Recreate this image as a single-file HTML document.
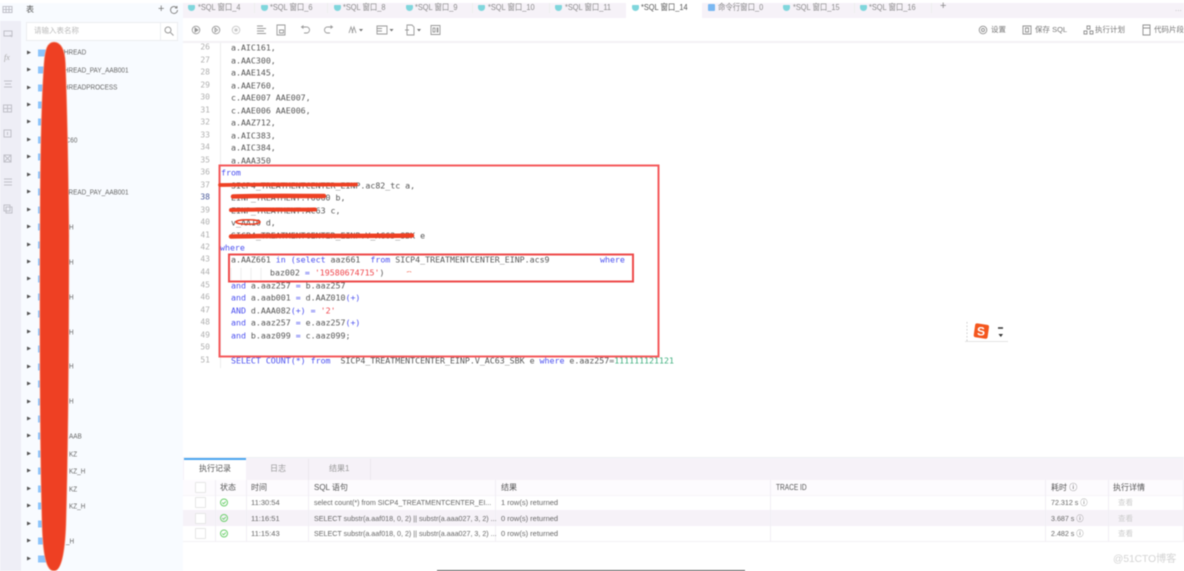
<!DOCTYPE html>
<html lang="zh"><head><meta charset="utf-8"><title>SQL</title>
<style>
html,body{margin:0;padding:0;background:#fff}
#p{position:relative;width:1184px;height:571px;overflow:hidden;background:#fff;font-family:"Liberation Sans","Noto Sans CJK SC",sans-serif;filter:blur(.5px)}
#p div,#p span.a{position:absolute;white-space:pre}
.tab{top:0;height:15px;line-height:15px;font-size:8.5px;color:#8a8a8a;transform:scaleX(.87);transform-origin:left}
.ti{top:4.500px;width:7px;height:6px;background:#7fd6dc;border-radius:1px 1px 4px 4px}
.n{left:190px;width:20px;text-align:right;font:8px/12px "DejaVu Sans Mono",monospace;color:#b0b0b0;transform:translateY(-.3px)}
.c{font:8.27px/12px "DejaVu Sans Mono",monospace;color:#555;transform:translateY(-.3px)}
.k{color:#4a4ff0}.s{color:#f0444a}.g{color:#3cae7c}
.arr{left:27px;width:0;height:0;border-left:4px solid #555;border-top:2.5px solid transparent;border-bottom:2.5px solid transparent;transform:translateY(.5px)}
.tb{left:38px;width:8px;height:7px;background:#8cc4fb;transform:translateY(.5px)}
.tt{font-size:7.500px;line-height:10px;color:#666}
.tr{transform:translateY(.7px) scaleX(.85);transform-origin:left;font-size:7.500px}
.h{font-size:8px;line-height:15px;color:#555}
.r{font-size:7.5px;line-height:15px;color:#666}
.q{transform:scaleX(.95);transform-origin:left}
.v{width:1px;background:#f1eef4;top:480px;height:61px}
.cb{left:195px;width:9px;height:9px;border:1px solid #e6e6e6;background:#fff;border-radius:1px}
</style></head><body>
<div id="p">
<!-- panels -->
<div style="left:0;top:3px;width:183px;height:568px;background:#f8fbff"></div>
<div style="left:0;top:21px;width:21px;height:550px;background:#eeeef6"></div>
<div style="left:183px;top:3px;width:1001px;height:15px;background:#f6f2f8"></div>
<div style="left:626px;top:3px;width:76px;height:15px;background:#fff"></div>
<div style="left:183px;top:41px;width:1001px;height:2px;background:#f3f2f5"></div>
<!-- rail icons -->
<svg style="position:absolute;left:0;top:0" width="21" height="220" fill="none" stroke="#c0c0c8" stroke-width="1">
<path d="M3 6.500h9v6h-9zM3 9.500h9M6 6.500v6M9 6.500v6"/>
<path d="M4 31h8v5h-8zM10 35l2 2"/>
<path d="M4 81h8M5 84h6M4 87h8"/>
<path d="M3.500 105h8v7h-8zM7.500 105v7M3.500 108.500h8"/>
<path d="M4 130h7v7h-7zM7.500 132v3"/>
<path d="M4 155h7v7h-7zM4 155l7 7M11 155l-7 7"/>
<path d="M4 179h8M4 182h8M4 185h8"/>
<path d="M4 205h6v6h-6zM6 207h6v6h-6z"/>
</svg>
<div style="left:4px;top:53px;font:italic 8px/10px 'Liberation Serif',serif;color:#aaa">fx</div>
<!-- sidebar head -->
<div style="left:26px;top:3px;font-size:8px;line-height:13px;color:#555">表</div>
<div style="left:158px;top:3px;font-size:11px;line-height:13px;color:#777">+</div>
<svg style="position:absolute;left:169px;top:5px" width="10" height="10" fill="none" stroke="#888"><path d="M8.500 5a3.500 3.500 0 1 1-1-2.500M8 1v2H6"/></svg>
<div style="left:26px;top:22px;width:150px;height:17px;background:#fff;border:1px solid #ecedf0"></div>
<div style="left:160px;top:23px;width:1px;height:17px;background:#eceef1"></div>
<div style="left:34px;top:25px;font-size:7.500px;line-height:12px;color:#bbb">请输入表名称</div>
<svg style="position:absolute;left:164px;top:26px" width="10" height="10" fill="none" stroke="#999"><circle cx="4" cy="4" r="3"/><path d="M6.500 6.500l3 3"/></svg>
<!-- tree -->
<div class="arr" style="top:49.500px"></div><div class="tb" style="top:48.500px"></div>
<div class="arr" style="top:67px"></div><div class="tb" style="top:66px"></div>
<div class="arr" style="top:84.500px"></div><div class="tb" style="top:83.500px"></div>
<div class="arr" style="top:102px"></div><div class="tb" style="top:101px"></div>
<div class="arr" style="top:119.300px"></div><div class="tb" style="top:118.300px"></div>
<div class="arr" style="top:136.800px"></div><div class="tb" style="top:135.800px"></div>
<div class="arr" style="top:154.200px"></div><div class="tb" style="top:153.200px"></div>
<div class="arr" style="top:171.700px"></div><div class="tb" style="top:170.700px"></div>
<div class="arr" style="top:189.100px"></div><div class="tb" style="top:188.100px"></div>
<div class="arr" style="top:206.600px"></div><div class="tb" style="top:205.600px"></div>
<div class="arr" style="top:224px"></div><div class="tb" style="top:223px"></div>
<div class="arr" style="top:241.500px"></div><div class="tb" style="top:240.500px"></div>
<div class="arr" style="top:258.900px"></div><div class="tb" style="top:257.900px"></div>
<div class="arr" style="top:276.400px"></div><div class="tb" style="top:275.400px"></div>
<div class="arr" style="top:293.800px"></div><div class="tb" style="top:292.800px"></div>
<div class="arr" style="top:311.300px"></div><div class="tb" style="top:310.300px"></div>
<div class="arr" style="top:328.700px"></div><div class="tb" style="top:327.700px"></div>
<div class="arr" style="top:346.200px"></div><div class="tb" style="top:345.200px"></div>
<div class="arr" style="top:363.600px"></div><div class="tb" style="top:362.600px"></div>
<div class="arr" style="top:381.100px"></div><div class="tb" style="top:380.100px"></div>
<div class="arr" style="top:398.500px"></div><div class="tb" style="top:397.500px"></div>
<div class="arr" style="top:416px"></div><div class="tb" style="top:415px"></div>
<div class="arr" style="top:433.400px"></div><div class="tb" style="top:432.400px"></div>
<div class="arr" style="top:450.900px"></div><div class="tb" style="top:449.900px"></div>
<div class="arr" style="top:468.300px"></div><div class="tb" style="top:467.300px"></div>
<div class="arr" style="top:485.800px"></div><div class="tb" style="top:484.800px"></div>
<div class="arr" style="top:503.200px"></div><div class="tb" style="top:502.200px"></div>
<div class="arr" style="top:520.700px"></div><div class="tb" style="top:519.700px"></div>
<div class="arr" style="top:538.100px"></div><div class="tb" style="top:537.100px"></div>
<div class="arr" style="top:555.600px"></div><div class="tb" style="top:554.600px"></div>
<div class="tt tr" style="left:60px;top:47px">THREAD</div>
<div class="tt tr" style="left:60px;top:64.500px">THREAD_PAY_AAB001</div>
<div class="tt tr" style="left:60px;top:82px">THREADPROCESS</div>
<div class="tt tr" style="left:58px;top:134.500px">TAC60</div>
<div class="tt tr" style="left:60px;top:186.500px">THREAD_PAY_AAB001</div>
<div class="tt tr" style="left:69px;top:221.500px">H</div>
<div class="tt tr" style="left:69px;top:256.500px">H</div>
<div class="tt tr" style="left:69px;top:291.500px">H</div>
<div class="tt tr" style="left:69px;top:326.500px">H</div>
<div class="tt tr" style="left:69px;top:361px">H</div>
<div class="tt tr" style="left:69px;top:396px">H</div>
<div class="tt tr" style="left:69px;top:431px">AAB</div>
<div class="tt tr" style="left:69px;top:448.500px">KZ</div>
<div class="tt tr" style="left:69px;top:466px">KZ_H</div>
<div class="tt tr" style="left:69px;top:483.500px">KZ</div>
<div class="tt tr" style="left:69px;top:501px">KZ_H</div>
<div class="tt tr" style="left:66px;top:536px">_H</div>
<!-- red redaction -->
<svg style="position:absolute;left:30px;top:35px" width="50" height="536"><path d="M24 7C31 7 35 15 35.500 28C37 70 38.500 140 39 200C39 320 38 420 36 490C35 515 32 536 24 536C16 536 13 520 12 490C10 420 9.500 320 10 200C10 140 11 70 14 28C15 15 17 7 24 7Z" fill="#ee4023" stroke="#f6a08c" stroke-width=".8"/></svg>
<!-- tabs -->
<div class="ti" style="left:188px"></div><div class="tab" style="left:198px">*SQL 窗口_4</div>
<div class="ti" style="left:261px"></div><div class="tab" style="left:270px">*SQL 窗口_6</div>
<div class="ti" style="left:334px"></div><div class="tab" style="left:343px">*SQL 窗口_8</div>
<div class="ti" style="left:406px"></div><div class="tab" style="left:415px">*SQL 窗口_9</div>
<div class="ti" style="left:478px"></div><div class="tab" style="left:488px">*SQL 窗口_10</div>
<div class="ti" style="left:555px"></div><div class="tab" style="left:565px">*SQL 窗口_11</div>
<div class="ti" style="left:632px"></div><div class="tab" style="left:641px;color:#555">*SQL 窗口_14</div>
<div style="left:708px;top:4px;width:7px;height:7px;background:#7ab8f2;border-radius:1px"></div><div class="tab" style="left:718px">命令行窗口_0</div>
<div class="ti" style="left:783px"></div><div class="tab" style="left:793px">*SQL 窗口_15</div>
<div class="ti" style="left:860px"></div><div class="tab" style="left:869px">*SQL 窗口_16</div>
<div style="left:940px;top:-1px;font-size:11px;line-height:15px;color:#888">+</div>
<div style="left:1175px;top:1px;font-size:8px;line-height:15px;color:#bbb">...</div>
<div style="left:254px;top:3px;width:1px;height:10px;background:#eee"></div>
<div style="left:327px;top:3px;width:1px;height:10px;background:#eee"></div>
<div style="left:472px;top:3px;width:1px;height:10px;background:#eee"></div>
<div style="left:549px;top:3px;width:1px;height:10px;background:#eee"></div>
<div style="left:854px;top:3px;width:1px;height:10px;background:#eee"></div>
<div style="left:931px;top:3px;width:1px;height:10px;background:#eee"></div>
<!-- toolbar icons -->
<svg style="position:absolute;left:183px;top:18px" width="270" height="24" fill="none" stroke="#999" stroke-width=".9">
<circle cx="13" cy="12" r="3.800"/><path d="M12 10l3 2-3 2z" fill="#8f8f8f"/>
<circle cx="33" cy="12" r="3.800"/><path d="M32 10l2.500 2-2.500 2z"/>
<g stroke="#c9c9c9"><circle cx="53" cy="12" r="3.800"/><circle cx="53" cy="12" r="1.200" fill="#c9c9c9"/></g>
<path d="M74 8h6M74 10.500h9M74 13h7M74 15.500h9"/>
<path d="M94 7h8v10h-8zM96.500 12h4v3h-4z"/>
<path d="M119 9h4a3 3 0 0 1 1 6h-3M120.500 7.500l-2 1.500 2 1.500"/>
<path d="M149 9h-4a3 3 0 0 0-1 6h3M147.500 7.500l2 1.500-2 1.500"/>
<path d="M166 15l2-6 2 6M169 15l2-6 2 6"/>
<path d="M194 8h10v8h-10zM194 10.500h5M194 13h5"/>
<path d="M224 7h5l2 2v8h-7zM222 12h4"/>
<path d="M248 7.500h9v9h-9zM250 10h2v4h-2zM254 10h1v4h-1z"/>
</svg>
<svg style="position:absolute;left:183px;top:18px" width="270" height="24" fill="#777">
<path d="M176 11h4l-2 2.500zM206.500 11h4l-2 2.500zM234 11h4l-2 2.500z"/>
</svg>
<!-- toolbar right -->
<svg style="position:absolute;left:975px;top:21px" width="180" height="18" fill="none" stroke="#8f8f8f" stroke-width=".9">
<circle cx="8" cy="9" r="3.800"/><circle cx="8" cy="9" r="1.500"/>
<path d="M48 5h8v8h-8zM50.500 7h3v4h-3z"/>
<path d="M112 5h3v3h-3zM109 10h3v3h-3zM115 10h3v3h-3z"/>
<path d="M168 4h7v10h-7zM168 7h7"/>
</svg>
<div class="tt" style="left:991px;top:25px;color:#777">设置</div>
<div class="tt" style="left:1035px;top:25px;color:#777">保存 SQL</div>
<div class="tt" style="left:1095px;top:25px;color:#777">执行计划</div>
<div class="tt" style="left:1154px;top:25px;color:#777">代码片段</div>
<!-- gutter -->
<div style="left:220px;top:43px;width:1px;height:325px;background:#ececec"></div>
<div class="n" style="top:42px">26</div><div class="c" style="left:231px;top:42px">a.AIC161,</div>
<div class="n" style="top:54.500px">27</div><div class="c" style="left:231px;top:54.500px">a.AAC300,</div>
<div class="n" style="top:67px">28</div><div class="c" style="left:231px;top:67px">a.AAE145,</div>
<div class="n" style="top:79.500px">29</div><div class="c" style="left:231px;top:79.500px">a.AAE760,</div>
<div class="n" style="top:92px">30</div><div class="c" style="left:231px;top:92px">c.AAE007 AAE007,</div>
<div class="n" style="top:104.500px">31</div><div class="c" style="left:231px;top:104.500px">c.AAE006 AAE006,</div>
<div class="n" style="top:117px">32</div><div class="c" style="left:231px;top:117px">a.AAZ712,</div>
<div class="n" style="top:129.500px">33</div><div class="c" style="left:231px;top:129.500px">a.AIC383,</div>
<div class="n" style="top:142px">34</div><div class="c" style="left:231px;top:142px">a.AIC384,</div>
<div class="n" style="top:154.500px">35</div><div class="c" style="left:231px;top:154.500px">a.AAA350</div>
<div class="n" style="top:167px">36</div><div class="c k" style="left:221px;top:167px">from</div>
<div class="n" style="top:179.500px">37</div><div class="c" style="left:231px;top:179.500px">SICP4_TREATMENTCENTER_EINP.ac82_tc a,</div>
<div class="n" style="top:192px;color:#4a5a9a">38</div><div class="c" style="left:231px;top:192px">EINP_TREATMENT.T6060 b,</div>
<div class="n" style="top:204.500px">39</div><div class="c" style="left:231px;top:204.500px">EINP_TREATMENT.AC63 c,</div>
<div class="n" style="top:217px">40</div><div class="c" style="left:231px;top:217px">v_AA10 d,</div>
<div class="n" style="top:229.500px">41</div><div class="c" style="left:231px;top:229.500px">SICP4_TREATMENTCENTER_EINP.V_AC63_SBK e</div>
<div class="n" style="top:242px">42</div><div class="c k" style="left:220px;top:242px">where</div>
<div class="n" style="top:254px">43</div><div class="c" style="left:231px;top:254px">a.AAZ661 <span class="k">in</span> <span class="k">(select</span> aaz661  <span class="k">from</span> SICP4_TREATMENTCENTER_EINP.acs9</div><div class="c k" style="left:600px;top:254px">where</div>
<div class="n" style="top:267px">44</div><div class="c" style="left:270px;top:267px">baz002 <span class="k">=</span> <span class="s">'19580674715'</span>)</div>
<div class="n" style="top:279.500px">45</div><div class="c" style="left:231px;top:279.500px"><span class="k">and</span> a.aaz257 <span class="k">=</span> b.aaz257</div>
<div class="n" style="top:292px">46</div><div class="c" style="left:231px;top:292px"><span class="k">and</span> a.aab001 <span class="k">=</span> d.AAZ010<span class="k">(+)</span></div>
<div class="n" style="top:304.500px">47</div><div class="c" style="left:231px;top:304.500px"><span class="k">AND</span> d.AAA082<span class="k">(+)</span> <span class="k">=</span> <span class="s">'2'</span></div>
<div class="n" style="top:317px">48</div><div class="c" style="left:231px;top:317px"><span class="k">and</span> a.aaz257 <span class="k">=</span> e.aaz257<span class="k">(+)</span></div>
<div class="n" style="top:329.500px">49</div><div class="c" style="left:231px;top:329.500px"><span class="k">and</span> b.aaz099 <span class="k">=</span> c.aaz099;</div>
<div class="n" style="top:342px">50</div>
<div class="n" style="top:354.500px">51</div><div class="c" style="left:231px;top:354.500px"><span class="k">SELECT COUNT(*) from</span>  SICP4_TREATMENTCENTER_EINP.V_AC63_SBK e <span class="k">where</span> e.aaz257=<span class="g">111111121121</span></div>
<!-- annotations -->
<svg style="position:absolute;left:0;top:0" width="1184" height="571" fill="none">
<rect x="219.500" y="165.500" width="439" height="191" stroke="#f4595b" stroke-width="2"/>
<rect x="229" y="254.500" width="404" height="27" stroke="#ee4a4a" stroke-width="2"/>
<g stroke="#ee4023" stroke-linecap="round">
<path d="M220 185C260 184 320 185 356 184.500" stroke-width="3.800"/>
<path d="M233 196.500C260 195.500 300 196 324 196" stroke-width="4.500"/>
<path d="M231 210C260 209 290 210 315 209.500" stroke-width="4"/>
<ellipse cx="248" cy="222" rx="12" ry="2.200" stroke-width="1.500"/>
<path d="M231 236.500C300 235 360 236.500 412 235.500" stroke-width="4.500"/>
<path d="M407 272l2-.5M410 271.500l1 .5" stroke-width=".6"/>
</g>
<path d="M231 268v12M241 268v12M251 268v12M261 268v12" stroke="#eee"/>
</svg>
<!-- sogou -->
<svg style="position:absolute;left:962px;top:318px" width="50" height="26">
<path d="M5 4v20" stroke="#ccc" stroke-dasharray="1.500 2" fill="none"/>
<path d="M3 23.500h43" stroke="#e4e4e4" fill="none"/>
<rect x="12.500" y="6" width="14" height="14" rx="2" fill="#f4561d" transform="rotate(8 19 12)"/>
<text x="15" y="17.500" font-family="Liberation Sans" font-size="12" font-weight="700" fill="#fff">S</text>
<path d="M36 10h5" stroke="#333" stroke-width="1.500"/><path d="M36.500 16h4.500l-2.200 3z" fill="#333"/>
</svg>
<!-- bottom panel -->
<div style="left:183px;top:457px;width:1001px;height:1px;background:#eef0f4"></div>
<div style="left:183px;top:458px;width:1001px;height:22px;background:#f6f2f8"></div>
<div style="left:184px;top:458px;width:62px;height:22px;background:#fff"></div>
<div style="left:184px;top:458px;width:62px;height:1.500px;background:#4aa5f0"></div>
<div style="left:308px;top:459px;width:1px;height:21px;background:#ebe8ee"></div>
<div style="left:370px;top:459px;width:1px;height:21px;background:#ebe8ee"></div>
<div class="h" style="left:199px;top:461px;color:#555">执行记录</div>
<div class="h" style="left:270px;top:461px;color:#999">日志</div>
<div class="h" style="left:329px;top:461px;color:#999">结果1</div>
<div style="left:183px;top:480px;width:1001px;height:15px;background:#fdfbfe"></div>
<div style="left:183px;top:510px;width:1001px;height:16px;background:#f6f2f8"></div>
<div style="left:183px;top:541px;width:1001px;height:1px;background:#f3f1f5"></div>
<div style="left:183px;top:495px;width:1001px;height:1px;background:#f6f4f8"></div>
<div class="v" style="left:215px"></div><div class="v" style="left:246px"></div><div class="v" style="left:308px"></div><div class="v" style="left:495px"></div><div class="v" style="left:770px"></div><div class="v" style="left:1045px"></div><div class="v" style="left:1108px"></div><div class="v" style="left:1183px"></div>
<div class="cb" style="top:482px"></div><div class="cb" style="top:497px"></div><div class="cb" style="top:513px"></div><div class="cb" style="top:528px"></div>
<svg style="position:absolute;left:0;top:0" width="1184" height="571" fill="none">
<g stroke="#6fd06f" stroke-width="1">
<circle cx="224" cy="502.500" r="3.500"/><path d="M222.300 502.500l1.300 1.300 2.200-2.300"/>
<circle cx="224" cy="518" r="3.500"/><path d="M222.300 518l1.300 1.300 2.200-2.300"/>
<circle cx="224" cy="533.500" r="3.500"/><path d="M222.300 533.500l1.300 1.300 2.200-2.300"/>
</g>
</svg>
<div class="h" style="left:220px;top:480px">状态</div><div class="h" style="left:251px;top:480px">时间</div><div class="h" style="left:314px;top:480px">SQL 语句</div><div class="h" style="left:501px;top:480px">结果</div><div class="h q" style="left:776px;top:480px;transform:scaleX(.82)">TRACE ID</div><div class="h" style="left:1051px;top:480px">耗时 ⓘ</div><div class="h" style="left:1113px;top:480px">执行详情</div>
<div class="r" style="left:251px;top:495px">11:30:54</div><div class="r q" style="left:314px;top:495px">select count(*) from SICP4_TREATMENTCENTER_EI...</div><div class="r" style="left:501px;top:495px">1 row(s) returned</div><div class="r q" style="left:1051px;top:495px">72.312 s ⓘ</div><div class="r" style="left:1118px;top:495px;color:#ccc">查看</div>
<div class="r" style="left:251px;top:510.500px">11:16:51</div><div class="r q" style="left:314px;top:510.500px">SELECT substr(a.aaf018, 0, 2) || substr(a.aaa027, 3, 2) ...</div><div class="r" style="left:501px;top:510.500px">0 row(s) returned</div><div class="r q" style="left:1051px;top:510.500px">3.687 s ⓘ</div><div class="r" style="left:1118px;top:510.500px;color:#ccc">查看</div>
<div class="r" style="left:251px;top:526px">11:15:43</div><div class="r q" style="left:314px;top:526px">SELECT substr(a.aaf018, 0, 2) || substr(a.aaa027, 3, 2) ...</div><div class="r" style="left:501px;top:526px">0 row(s) returned</div><div class="r q" style="left:1051px;top:526px">2.482 s ⓘ</div><div class="r" style="left:1118px;top:526px;color:#ccc">查看</div>
<div style="left:437px;top:570px;width:308px;height:1px;background:#555"></div>
<div style="left:1113px;top:552.500px;font-size:10.200px;line-height:14px;color:#d4d4d4">@51CTO博客</div>
</div>
</body></html>
